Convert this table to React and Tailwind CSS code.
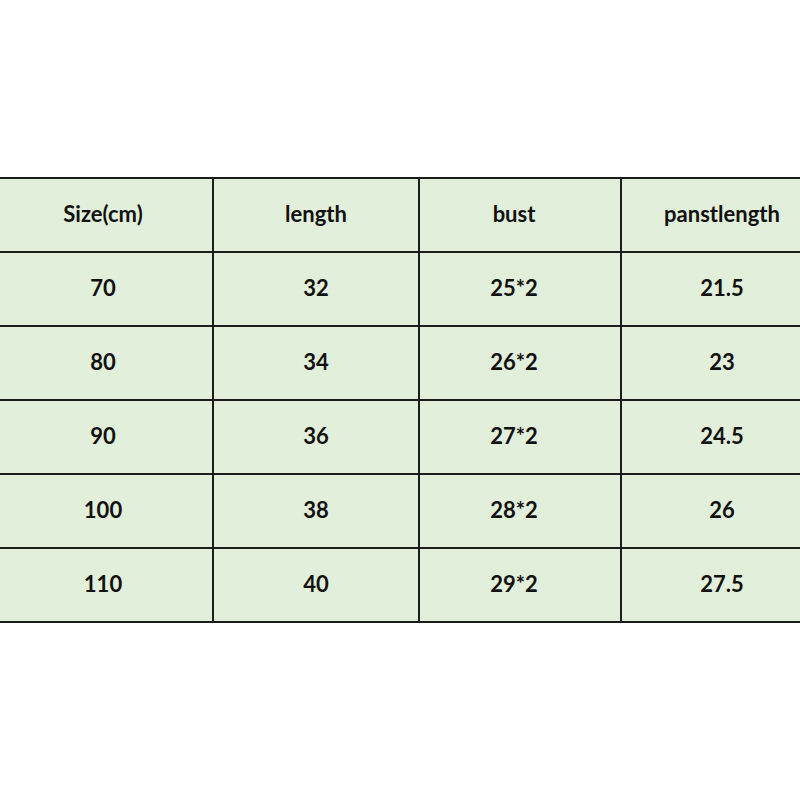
import React from "react";

const header = ["Size(cm)", "length", "bust", "panstlength"];
const rows = [
  ["70", "32", "25*2", "21.5"],
  ["80", "34", "26*2", "23"],
  ["90", "36", "27*2", "24.5"],
  ["100", "38", "28*2", "26"],
  ["110", "40", "29*2", "27.5"],
];

function Row({ cells, first }) {
  return (
    <div
      className={`grid grid-cols-[220px_206px_202px_200px] border-b-2 border-[#1c1c1c] ${
        first ? "border-t-2 h-[76px]" : "h-[74px]"
      }`}
    >
      {cells.map((c, i) => (
        <div
          key={i}
          className={`flex items-center justify-center bg-[#e2efda] pb-[4px] text-[22px] font-bold text-[#111] ${
            i < 3 ? "border-r-2 border-[#1c1c1c]" : ""
          } ${i === 2 ? "pr-[12px]" : ""}`}
        >
          {c}
        </div>
      ))}
    </div>
  );
}

export default function App() {
  return (
    <div
      className="w-[800px] h-[800px] bg-white overflow-hidden pt-[177px]"
      style={{ fontFamily: "Lato, 'Open Sans', sans-serif" }}
    >
      <div className="w-[828px] -ml-[6px]">
        <Row cells={header} first />
        {rows.map((r, i) => (
          <Row key={i} cells={r} />
        ))}
      </div>
    </div>
  );
}
